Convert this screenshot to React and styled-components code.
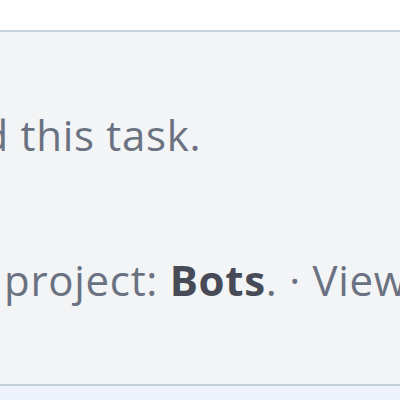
import React from 'react';
import styled, { createGlobalStyle } from 'styled-components';

const GlobalStyle = createGlobalStyle`
	html, body {
		margin: 0;
		padding: 0;
		background: #fff;
		overflow: hidden;
	}
	body {
		font-family: "Open Sans", "Noto Sans", sans-serif;
	}
`;

const Page = styled.div`
	width: 400px;
	height: 400px;
	padding-top: 30px;
	box-sizing: border-box;
	display: flex;
	flex-direction: column;
	overflow: hidden;
`;

const Panel = styled.div`
	background: #f3f4f6;
	border-top: 2px solid #c5d0da;
	border-bottom: 2px solid #c2cfd9;
	height: 352px;
	padding-top: 74px;
	display: flex;
	flex-direction: column;
	gap: 87px;
	box-sizing: border-box;
	height: 356px;
`;

const Footer = styled.div`
	flex: 1;
	background: #eef3fb;
`;

// each line is cut at the left edge: the lead text overflows out of a zero-width box
const Line = styled.p`
	margin: 0;
	display: flex;
	white-space: pre;
	font-size: 42px;
	line-height: 58px;
	letter-spacing: 0.7px;
	color: #6a7282;
	padding-left: ${p => p.$indent}px;
`;

const Lead = styled.span`
	flex: 0 0 0;
	width: 0;
	display: flex;
	justify-content: flex-end;
`;

const Strong = styled.b`
	font-weight: 700;
	color: #464b57;
`;

export default function App() {
	return (
		<Page>
			<GlobalStyle />
			<Panel>
				<Line $indent={9}>
					<Lead>No one has claimed</Lead>
					<span> this task.</span>
				</Line>
				<Line $indent={4}>
					<Lead>This task belongs to </Lead>
					<span>
						project: <Strong>Bots</Strong>. · View Workboard
					</span>
				</Line>
			</Panel>
			<Footer />
		</Page>
	);
}
